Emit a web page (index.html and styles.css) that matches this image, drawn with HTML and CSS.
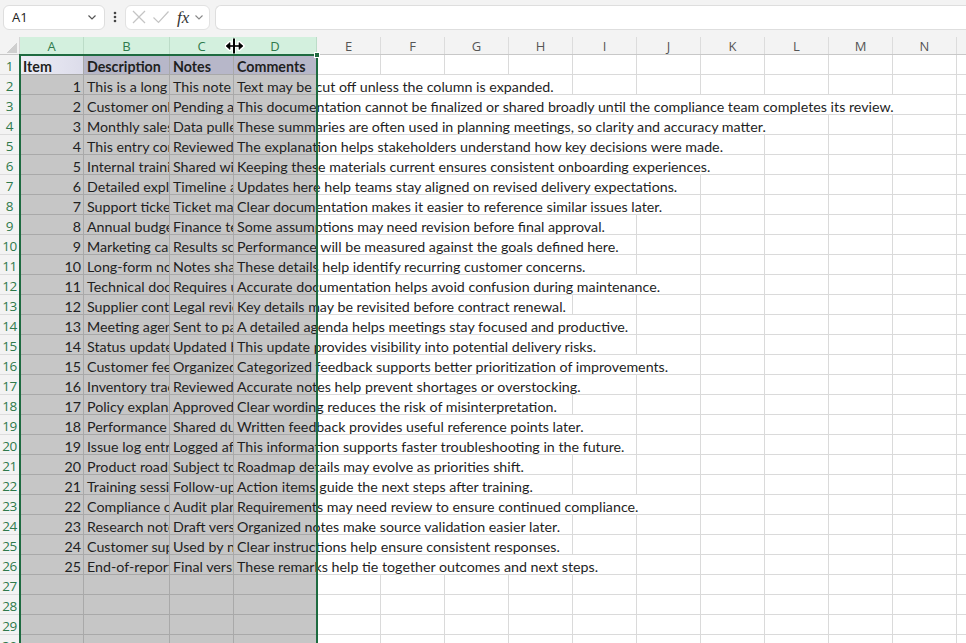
FILE: index.html
```html
<!DOCTYPE html>
<html lang="en">

<head>
    <meta charset="utf-8" />
    <title>Book1 - Excel</title>
    <link rel="stylesheet" href="styles.css">
</head>

<body>
    <!-- formula bar -->
    <div class="toolbar">
        <div class="namebox">
            <span>A1</span>
            <svg class="chev" width="12" height="12" viewBox="0 0 12 12" fill="none" stroke="#555" stroke-width="1.2">
                <polyline points="2.5 4.5 6 8 9.5 4.5" />
            </svg>
        </div>
        <div class="dots">
            <svg width="4" height="14" viewBox="0 0 4 14" fill="#444">
                <circle cx="2" cy="3" r="1.3" />
                <circle cx="2" cy="7" r="1.3" />
                <circle cx="2" cy="11" r="1.3" />
            </svg>
        </div>
        <div class="fxbox">
            <svg width="16" height="16" viewBox="0 0 16 16" fill="none" stroke="#c4c4c4" stroke-width="1.2">
                <line x1="2" y1="2" x2="14" y2="14" />
                <line x1="14" y1="2" x2="2" y2="14" />
            </svg>
            <svg width="18" height="16" viewBox="0 0 18 16" fill="none" stroke="#c4c4c4" stroke-width="1.2">
                <polyline points="1.5 8.5 6.5 13.5 16.5 2.5" />
            </svg>
            <span class="fx">fx</span>
            <svg width="10" height="10" viewBox="0 0 10 10" fill="none" stroke="#888" stroke-width="1.1">
                <polyline points="1.5 3.5 5 7 8.5 3.5" />
            </svg>
        </div>
        <div class="formula"></div>
    </div>

    <div class="sheet">
        <div class="colhead">
            <div class="corner"></div>
            <div class="ch sel a">A</div>
            <div class="ch sel b">B</div>
            <div class="ch sel c">C</div>
            <div class="ch sel d">D</div>
            <div class="ch">E</div>
            <div class="ch">F</div>
            <div class="ch">G</div>
            <div class="ch">H</div>
            <div class="ch">I</div>
            <div class="ch">J</div>
            <div class="ch">K</div>
            <div class="ch">L</div>
            <div class="ch">M</div>
            <div class="ch">N</div>
            <div class="ch fill"></div>
        </div>

        <div class="row">
            <div class="rh">1</div>
            <div class="cell a head first">Item</div>
            <div class="cell b head">Description</div>
            <div class="cell c head">Notes</div>
            <div class="cell d head">Comments</div>
            <div class="rest"></div>
        </div>
        <div class="row"><div class="rh">2</div><div class="cell a num">1</div><div class="cell b">This is a long description</div><div class="cell c">This note provides</div><div class="cell d"><span>Text may be cut off unless the column is expanded.</span></div><div class="rest"></div></div>
        <div class="row"><div class="rh">3</div><div class="cell a num">2</div><div class="cell b">Customer onboarding</div><div class="cell c">Pending approval</div><div class="cell d"><span>This documentation cannot be finalized or shared broadly until the compliance team completes its review.</span></div><div class="rest"></div></div>
        <div class="row"><div class="rh">4</div><div class="cell a num">3</div><div class="cell b">Monthly sales summary</div><div class="cell c">Data pulled from</div><div class="cell d"><span>These summaries are often used in planning meetings, so clarity and accuracy matter.</span></div><div class="rest"></div></div>
        <div class="row"><div class="rh">5</div><div class="cell a num">4</div><div class="cell b">This entry contains</div><div class="cell c">Reviewed by</div><div class="cell d"><span>The explanation helps stakeholders understand how key decisions were made.</span></div><div class="rest"></div></div>
        <div class="row"><div class="rh">6</div><div class="cell a num">5</div><div class="cell b">Internal training</div><div class="cell c">Shared with</div><div class="cell d"><span>Keeping these materials current ensures consistent onboarding experiences.</span></div><div class="rest"></div></div>
        <div class="row"><div class="rh">7</div><div class="cell a num">6</div><div class="cell b">Detailed explanation</div><div class="cell c">Timeline adjusted</div><div class="cell d"><span>Updates here help teams stay aligned on revised delivery expectations.</span></div><div class="rest"></div></div>
        <div class="row"><div class="rh">8</div><div class="cell a num">7</div><div class="cell b">Support ticket</div><div class="cell c">Ticket marked</div><div class="cell d"><span>Clear documentation makes it easier to reference similar issues later.</span></div><div class="rest"></div></div>
        <div class="row"><div class="rh">9</div><div class="cell a num">8</div><div class="cell b">Annual budget</div><div class="cell c">Finance team</div><div class="cell d"><span>Some assumptions may need revision before final approval.</span></div><div class="rest"></div></div>
        <div class="row"><div class="rh">10</div><div class="cell a num">9</div><div class="cell b">Marketing campaign</div><div class="cell c">Results scheduled</div><div class="cell d"><span>Performance will be measured against the goals defined here.</span></div><div class="rest"></div></div>
        <div class="row"><div class="rh">11</div><div class="cell a num">10</div><div class="cell b">Long-form notes</div><div class="cell c">Notes shared</div><div class="cell d"><span>These details help identify recurring customer concerns.</span></div><div class="rest"></div></div>
        <div class="row"><div class="rh">12</div><div class="cell a num">11</div><div class="cell b">Technical documentation</div><div class="cell c">Requires update</div><div class="cell d"><span>Accurate documentation helps avoid confusion during maintenance.</span></div><div class="rest"></div></div>
        <div class="row"><div class="rh">13</div><div class="cell a num">12</div><div class="cell b">Supplier contract</div><div class="cell c">Legal review</div><div class="cell d"><span>Key details may be revisited before contract renewal.</span></div><div class="rest"></div></div>
        <div class="row"><div class="rh">14</div><div class="cell a num">13</div><div class="cell b">Meeting agenda</div><div class="cell c">Sent to participants</div><div class="cell d"><span>A detailed agenda helps meetings stay focused and productive.</span></div><div class="rest"></div></div>
        <div class="row"><div class="rh">15</div><div class="cell a num">14</div><div class="cell b">Status update</div><div class="cell c">Updated by</div><div class="cell d"><span>This update provides visibility into potential delivery risks.</span></div><div class="rest"></div></div>
        <div class="row"><div class="rh">16</div><div class="cell a num">15</div><div class="cell b">Customer feedback</div><div class="cell c">Organized by</div><div class="cell d"><span>Categorized feedback supports better prioritization of improvements.</span></div><div class="rest"></div></div>
        <div class="row"><div class="rh">17</div><div class="cell a num">16</div><div class="cell b">Inventory tracking</div><div class="cell c">Reviewed weekly</div><div class="cell d"><span>Accurate notes help prevent shortages or overstocking.</span></div><div class="rest"></div></div>
        <div class="row"><div class="rh">18</div><div class="cell a num">17</div><div class="cell b">Policy explanation</div><div class="cell c">Approved by</div><div class="cell d"><span>Clear wording reduces the risk of misinterpretation.</span></div><div class="rest"></div></div>
        <div class="row"><div class="rh">19</div><div class="cell a num">18</div><div class="cell b">Performance review</div><div class="cell c">Shared during</div><div class="cell d"><span>Written feedback provides useful reference points later.</span></div><div class="rest"></div></div>
        <div class="row"><div class="rh">20</div><div class="cell a num">19</div><div class="cell b">Issue log entry</div><div class="cell c">Logged after</div><div class="cell d"><span>This information supports faster troubleshooting in the future.</span></div><div class="rest"></div></div>
        <div class="row"><div class="rh">21</div><div class="cell a num">20</div><div class="cell b">Product roadmap</div><div class="cell c">Subject to change</div><div class="cell d"><span>Roadmap details may evolve as priorities shift.</span></div><div class="rest"></div></div>
        <div class="row"><div class="rh">22</div><div class="cell a num">21</div><div class="cell b">Training session</div><div class="cell c">Follow-up sent</div><div class="cell d"><span>Action items guide the next steps after training.</span></div><div class="rest"></div></div>
        <div class="row"><div class="rh">23</div><div class="cell a num">22</div><div class="cell b">Compliance checklist</div><div class="cell c">Audit planned</div><div class="cell d"><span>Requirements may need review to ensure continued compliance.</span></div><div class="rest"></div></div>
        <div class="row"><div class="rh">24</div><div class="cell a num">23</div><div class="cell b">Research notes</div><div class="cell c">Draft version</div><div class="cell d"><span>Organized notes make source validation easier later.</span></div><div class="rest"></div></div>
        <div class="row"><div class="rh">25</div><div class="cell a num">24</div><div class="cell b">Customer support</div><div class="cell c">Used by new</div><div class="cell d"><span>Clear instructions help ensure consistent responses.</span></div><div class="rest"></div></div>
        <div class="row"><div class="rh">26</div><div class="cell a num">25</div><div class="cell b">End-of-report summary</div><div class="cell c">Final version</div><div class="cell d"><span>These remarks help tie together outcomes and next steps.</span></div><div class="rest"></div></div>
        <div class="row"><div class="rh">27</div><div class="cell a"></div><div class="cell b"></div><div class="cell c"></div><div class="cell d"></div><div class="rest"></div></div>
        <div class="row"><div class="rh">28</div><div class="cell a"></div><div class="cell b"></div><div class="cell c"></div><div class="cell d"></div><div class="rest"></div></div>
        <div class="row"><div class="rh">29</div><div class="cell a"></div><div class="cell b"></div><div class="cell c"></div><div class="cell d"></div><div class="rest"></div></div>
        <div class="row"><div class="rh">30</div><div class="cell a"></div><div class="cell b"></div><div class="cell c"></div><div class="cell d"></div><div class="rest"></div></div>

        <!-- selected range A:D -->
        <div class="selection"><div class="handle"></div></div>

        <!-- column resize cursor -->
        <svg class="cursor" width="20" height="18" viewBox="0 0 20 18">
            <g stroke="#fff" stroke-width="3.5" fill="#fff" stroke-linejoin="round">
                <line x1="9" y1="1.5" x2="9" y2="16.5" />
                <line x1="3" y1="9" x2="16" y2="9" />
                <polygon points="1 9 5 5.5 5 12.5" />
                <polygon points="18 9 14 5.5 14 12.5" />
            </g>
            <g stroke="#000" stroke-width="1.6" fill="#000">
                <line x1="9" y1="1.5" x2="9" y2="16.5" stroke-width="2" />
                <line x1="3" y1="9" x2="16" y2="9" />
                <polygon points="1 9 5 5.5 5 12.5" stroke-width="0.6" />
                <polygon points="18 9 14 5.5 14 12.5" stroke-width="0.6" />
            </g>
        </svg>
    </div>
</body>

</html>
```

FILE: styles.css
```css
:root {
    --ui-bg: #f3f3f3;
    --grid: #dadada;
    --sel-bg: #c6c6c6;
    --sel-grid: #a9a9a9;
    --green: #1e6b40;
    --green-text: #2f7a4c;
    --text: #1f1f1f;
}

* {
    box-sizing: border-box;
}

html,
body {
    margin: 0;
    height: 100%;
    overflow: hidden;
}

body {
    background: var(--ui-bg);
    font-family: "Lato", "Liberation Sans", sans-serif;
    color: var(--text);
}

/* formula bar */
.toolbar {
    display: flex;
    align-items: center;
    height: 37px;
    padding: 3px 0 6px 3px;
}

.namebox {
    display: flex;
    align-items: center;
    justify-content: space-between;
    width: 102px;
    height: 25px;
    padding: 0 6px 0 8px;
    background: #fff;
    border: 1px solid #dedede;
    border-radius: 6px;
    font-family: "Open Sans", sans-serif;
    font-size: 13px;
    color: #222;
}

.dots {
    display: flex;
    width: 20px;
    justify-content: center;
}

.fxbox {
    display: flex;
    align-items: center;
    gap: 5px;
    width: 85px;
    height: 25px;
    padding: 0 4px 0 5px;
    background: #fff;
    border: 1px solid #e2e2e2;
    border-radius: 6px;
}

.fx {
    font-family: "Liberation Serif", serif;
    font-style: italic;
    font-size: 17px;
    color: #333;
    margin-left: 2px;
    line-height: 1;
}

.formula {
    flex: 1;
    height: 25px;
    margin-left: 5px;
    background: #fff;
    border: 1px solid #dedede;
    border-right: none;
    border-radius: 6px 0 0 6px;
}

/* grid */
.sheet {
    position: relative;
    height: 606px;
    overflow: hidden;
    background: #fff;
}

.colhead {
    display: flex;
    height: 18px;
    background: var(--ui-bg);
    border-bottom: 1px solid #c8c8c8;
}

.corner {
    width: 20px;
    border-right: 1px solid #d6d6d6;
    background: linear-gradient(135deg, transparent 60%, #cfcfcf 60%) no-repeat 4px 3px / 13px 13px;
}

.ch {
    width: 64px;
    flex: none;
    border-right: 1px solid #dcdcdc;
    text-align: center;
    font-family: "Open Sans", sans-serif;
    font-size: 13px;
    line-height: 17px;
    padding-top: 1px;
    color: #555;
}

.ch.sel {
    background: #d3f0de;
    color: var(--green-text);
    border-right-color: #bcdcc8;
}

.ch.fill {
    flex: 1;
    border-right: none;
}

.a { width: 64px; }
.b { width: 86px; }
.c { width: 64px; }
.d { width: 83px; }

.row {
    display: flex;
    height: 20px;
}

.rh {
    width: 20px;
    flex: none;
    background: var(--ui-bg);
    border-right: 1px solid #d6d6d6;
    border-bottom: 1px solid #dcdcdc;
    text-align: center;
    font-family: "Open Sans", sans-serif;
    font-size: 13.5px;
    line-height: 19px;
    padding-top: 2px;
    color: var(--green-text);
    letter-spacing: -0.4px;
    overflow: hidden;
}

.cell {
    flex: none;
    height: 20px;
    padding: 2px 3px 0;
    background: var(--sel-bg);
    border-right: 1px solid var(--sel-grid);
    border-bottom: 1px solid var(--sel-grid);
    font-size: 14.25px;
    line-height: 19px;
    white-space: nowrap;
    overflow: hidden;
}

.cell.num {
    text-align: right;
    padding-right: 2px;
}

.cell.head {
    font-weight: 700;
    background: #b7b7c9;
}

.cell.head.first {
    background: linear-gradient(to right, #eeeef6, #dcdcea);
}

/* comments overflow into the empty columns to the right */
.cell.d {
    overflow: visible;
    position: relative;
    z-index: 1;
}

.cell.d span {
    display: inline-block;
    height: 19px;
    margin-top: -2px;
    padding-top: 2px;
    line-height: 19px;
    background: linear-gradient(to right, transparent 79px, #fff 79px);
}

.rest {
    flex: 1;
    height: 20px;
    border-bottom: 1px solid var(--grid);
    background: linear-gradient(to right, transparent 63px, var(--grid) 63px) 0 0 / 64px 100%;
}

.selection {
    position: absolute;
    left: 19px;
    top: 17px;
    width: 299px;
    height: 620px;
    border: 2px solid var(--green);
    pointer-events: none;
    z-index: 2;
}

.handle {
    position: absolute;
    right: -4px;
    top: -4px;
    width: 6px;
    height: 6px;
    background: var(--green);
    border: 1px solid #fff;
}

.cursor {
    position: absolute;
    left: 225px;
    top: 0;
    z-index: 3;
}
```
